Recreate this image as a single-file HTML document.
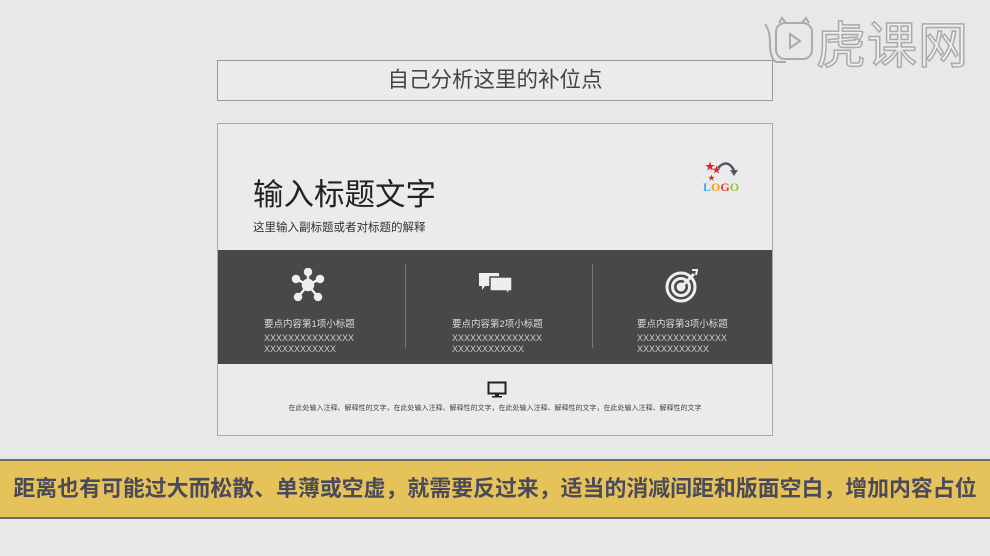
<!DOCTYPE html>
<html><head><meta charset="utf-8"><style>
body{margin:0;width:990px;height:556px;background:#e8e8e8;position:relative;overflow:hidden;font-family:"Liberation Sans","Noto Sans CJK SC",sans-serif}
.a{position:absolute}
</style></head><body>
<svg class="a" style="left:762px;top:16px" width="54" height="52" viewBox="0 0 54 52" fill="none" stroke="#aaa" stroke-width="2"><path d="M3 8 Q8 14 8 28 Q8 42 14 46 L24 46"/><rect x="14" y="7" width="36" height="36" rx="9"/><path d="M17 7 l3 -5 l4 5 M40 7 l4 -5 l3 5"/><path d="M28 18 l10 7 l-10 7 z"/></svg>
<div class="a" style="left:816px;top:14px;font-size:50px;color:#eee;-webkit-text-stroke:1.5px #aaa;font-family:'Noto Sans CJK SC',sans-serif;line-height:56px;letter-spacing:1px">虎课网</div>
<div class="a" style="left:217px;top:60px;width:554px;height:39px;border:1px solid #999;background:#ebebeb;text-align:center;line-height:39px;font-size:21.5px;color:#444">自己分析这里的补位点</div>
<div class="a" style="left:217px;top:123px;width:554px;height:311px;border:1px solid #a8a8a8;background:#ebebeb">
 <div class="a" style="left:35px;top:52px;font-size:30.5px;color:#222;line-height:38px">输入标题文字</div>
 <div class="a" style="left:35px;top:95px;font-size:11.5px;color:#333">这里输入副标题或者对标题的解释</div>
 <div class="a" style="left:485px;top:36px;width:50px;height:36px">
  <svg width="50" height="36" viewBox="0 0 50 36"><text x="2" y="10" font-size="10" fill="#d22">★</text><text x="9" y="13" font-size="9" fill="#d22">★</text><text x="5" y="20" font-size="7" fill="#d22">★</text><path d="M15 8 Q24 -2 31 10" stroke="#556" stroke-width="2.5" fill="none"/><path d="M27 10 L35 10 L31 16 Z" fill="#556"/><text x="0" y="31" font-size="12" font-weight="bold" font-family="Liberation Serif" fill="#2a9"><tspan fill="#3af">L</tspan><tspan fill="#f90">O</tspan><tspan fill="#e33">G</tspan><tspan fill="#8c3">O</tspan></text></svg>
 </div>
 <div class="a" style="left:0;top:126px;width:554px;height:114px;background:#484848;color:#ddd;font-size:9px">
  <div class="a" style="left:187px;top:14px;width:1px;height:84px;background:#777"></div>
  <div class="a" style="left:374px;top:14px;width:1px;height:84px;background:#777"></div>
  <svg class="a" style="left:73px;top:18px" width="34" height="34" viewBox="0 0 34 34" fill="#eee" stroke="#eee" stroke-width="2.5"><line x1="17" y1="17" x2="17" y2="4"/><line x1="17" y1="17" x2="5" y2="11"/><line x1="17" y1="17" x2="29" y2="11"/><line x1="17" y1="17" x2="7" y2="29"/><line x1="17" y1="17" x2="27" y2="29"/><circle cx="17" cy="17" r="5"/><circle cx="17" cy="4" r="3"/><circle cx="5" cy="11" r="3"/><circle cx="29" cy="11" r="3"/><circle cx="7" cy="29" r="3"/><circle cx="27" cy="29" r="3"/></svg>
  <svg class="a" style="left:260px;top:22px" width="36" height="26" viewBox="0 0 36 26" fill="#eee"><path d="M1 1h20v13h-14l-3 4v-4h-3z"/><path d="M12 5h22v14h-3v4l-3-4h-16z" stroke="#484848" stroke-width="1.5"/></svg>
  <svg class="a" style="left:446px;top:18px" width="36" height="36" viewBox="0 0 36 36" fill="none" stroke="#eee" stroke-width="3"><circle cx="17" cy="19" r="14"/><circle cx="17" cy="19" r="8.5"/><circle cx="17" cy="19" r="3" fill="#eee"/><line x1="17" y1="19" x2="30" y2="6"/><path d="M28 2l5 0-1 5" stroke-width="2"/></svg>
  <div class="a" style="left:46px;top:66px;font-size:9.5px">要点内容第1项小标题</div>
  <div class="a" style="left:46px;top:83px;line-height:11px;font-size:9px;color:#ccc">XXXXXXXXXXXXXXX<br>XXXXXXXXXXXX</div>
  <div class="a" style="left:234px;top:66px;font-size:9.5px">要点内容第2项小标题</div>
  <div class="a" style="left:234px;top:83px;line-height:11px;font-size:9px;color:#ccc">XXXXXXXXXXXXXXX<br>XXXXXXXXXXXX</div>
  <div class="a" style="left:419px;top:66px;font-size:9.5px">要点内容第3项小标题</div>
  <div class="a" style="left:419px;top:83px;line-height:11px;font-size:9px;color:#ccc">XXXXXXXXXXXXXXX<br>XXXXXXXXXXXX</div>
 </div>
 <svg class="a" style="left:269px;top:257px" width="20" height="18" viewBox="0 0 20 18"><rect x="1.5" y="1.5" width="17" height="11" fill="none" stroke="#222" stroke-width="2"/><rect x="8" y="13" width="4" height="2" fill="#222"/><rect x="5" y="15" width="10" height="1.5" fill="#222"/></svg>
 <div class="a" style="left:0;top:279px;width:554px;text-align:center;font-size:7px;color:#444;white-space:nowrap">在此处输入注释、解释性的文字，在此处输入注释、解释性的文字，在此处输入注释、解释性的文字，在此处输入注释、解释性的文字</div>
</div>
<div class="a" style="left:0;top:459px;width:990px;height:56px;background:#e5c35a;border-top:2px solid #6a6a6a;border-bottom:2px solid #6a6a6a;text-align:center;line-height:56px;font-size:21.9px;font-weight:bold;color:#4a4a5c;white-space:nowrap">距离也有可能过大而松散、单薄或空虚，就需要反过来，适当的消减间距和版面空白，增加内容占位</div>
</body></html>
